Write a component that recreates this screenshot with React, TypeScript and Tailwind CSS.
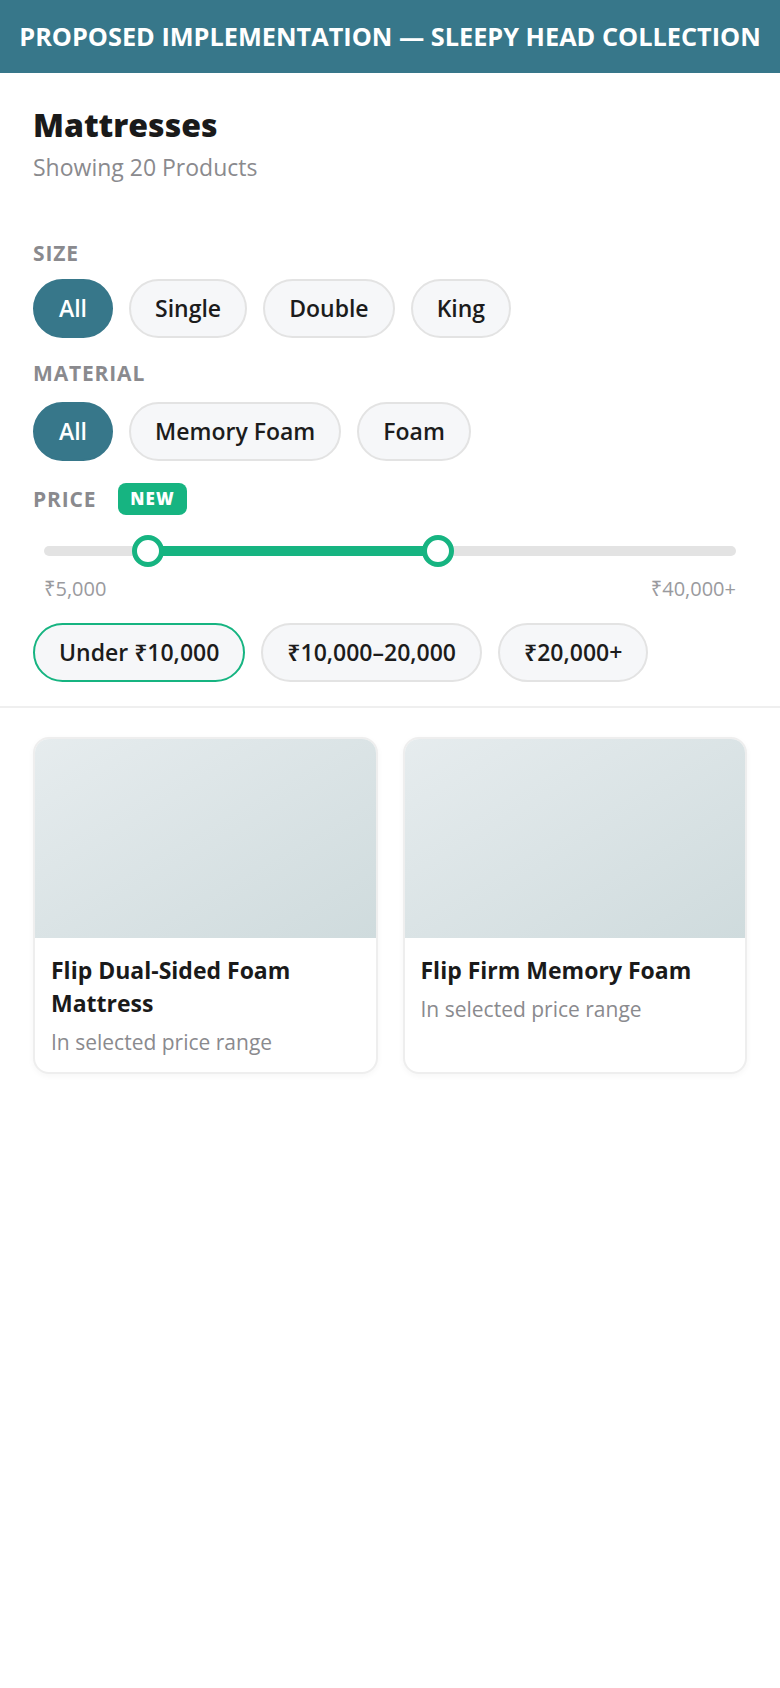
import React from "react";

const sizes = ["All", "Single", "Double", "King"];
const materials = ["All", "Memory Foam", "Foam"];
const prices = ["Under ₹10,000", "₹10,000–20,000", "₹20,000+"];

const products = [
    { name: "Flip Dual-Sided Foam Mattress", note: "In selected price range" },
    { name: "Flip Firm Memory Foam", note: "In selected price range" },
];

function Chip({ label, active, outline }: { label: string; active?: boolean; outline?: boolean }) {
    if (active) {
        return (
            <button className="h-[59px] px-[24px] rounded-full bg-[#37778a] border-2 border-[#37778a] text-white text-[23px] font-semibold">
                {label}
            </button>
        );
    }
    return (
        <button
            className={
                outline
                    ? "h-[59px] px-[24px] rounded-full bg-[#f6f7f9] border-2 border-[#16b481] text-[#1c1c1c] text-[23px] font-semibold"
                    : "h-[59px] px-[24px] rounded-full bg-[#f6f7f9] border-2 border-[#e3e3e3] text-[#1c1c1c] text-[23px] font-semibold"
            }
        >
            {label}
        </button>
    );
}

function Label({ children }: { children: React.ReactNode }) {
    return (
        <div className="text-[21px] leading-[24px] font-bold tracking-[0.04em] text-[#8a8a8e] uppercase">
            {children}
        </div>
    );
}

export default function App() {
    return (
        <div className="min-h-screen bg-white" style={{ fontFamily: '"Open Sans", "Noto Sans", sans-serif' }}>
            {/* Banner */}
            <header className="h-[73px] bg-[#37778a] flex items-center justify-center">
                <h1 className="text-white text-[25.3px] font-bold uppercase whitespace-nowrap">
                    Proposed Implementation — Sleepy Head Collection
                </h1>
            </header>

            {/* Filters */}
            <section className="px-[33px] pt-[33px] pb-[24px] border-b-2 border-[#efefef]">
                <h2 className="text-[32px] leading-[38px] font-extrabold text-[#1a1a1a]">Mattresses</h2>
                <p className="mt-[9px] text-[23px] leading-[28px] text-[#8a8a8e]">Showing 20 Products</p>

                <div className="mt-[60px]">
                    <Label>Size</Label>
                    <div className="mt-[14px] flex gap-4">
                        {sizes.map((s, i) => (
                            <Chip key={s} label={s} active={i === 0} />
                        ))}
                    </div>
                </div>

                <div className="mt-[23px]">
                    <Label>Material</Label>
                    <div className="mt-[17px] flex gap-4">
                        {materials.map((m, i) => (
                            <Chip key={m} label={m} active={i === 0} />
                        ))}
                    </div>
                </div>

                <div className="mt-[22px]">
                    <div className="flex items-center gap-[22px]">
                        <Label>Price</Label>
                        <span className="h-[32px] px-[12px] rounded-[8px] bg-[#16b481] text-white text-[17px] font-extrabold tracking-[0.06em] flex items-center">
                            NEW
                        </span>
                    </div>

                    {/* Range slider */}
                    <div className="relative mt-[20px] mx-[11px] h-[32px] flex items-center">
                        <div className="w-full h-[10px] rounded-full bg-[#e3e3e3]" />
                        <div className="absolute left-[104px] w-[290px] h-[10px] bg-[#16b481]" />
                        <div className="absolute left-[88px] w-[32px] h-[32px] rounded-full bg-white border-[5px] border-[#16b481]" />
                        <div className="absolute left-[378px] w-[32px] h-[32px] rounded-full bg-white border-[5px] border-[#16b481]" />
                    </div>
                    <div className="mt-[10px] mx-[11px] flex justify-between text-[20px] leading-[24px] text-[#9a9a9e]">
                        <span>₹5,000</span>
                        <span>₹40,000+</span>
                    </div>

                    <div className="mt-[22px] flex gap-[16px]">
                        {prices.map((p, i) => (
                            <Chip key={p} label={p} outline={i === 0} />
                        ))}
                    </div>
                </div>
            </section>

            {/* Products */}
            <section className="px-[33px] pt-[29px] grid grid-cols-2 gap-[25px]">
                {products.map((p) => (
                    <div
                        key={p.name}
                        className="rounded-[16px] border-2 border-[#eeeeee] bg-white overflow-hidden shadow-[0_2px_6px_rgba(0,0,0,0.04)]"
                    >
                        <div className="h-[199px] bg-gradient-to-br from-[#e6ecee] to-[#cfdbdd]" />
                        <div className="px-[16px] pt-[16px] pb-[16px]">
                            <h3 className="text-[23px] leading-[33px] font-bold text-[#1a1a1a]">{p.name}</h3>
                            <p className="mt-[8px] text-[21px] leading-[28px] text-[#8a8a8e]">{p.note}</p>
                        </div>
                    </div>
                ))}
            </section>
        </div>
    );
}
